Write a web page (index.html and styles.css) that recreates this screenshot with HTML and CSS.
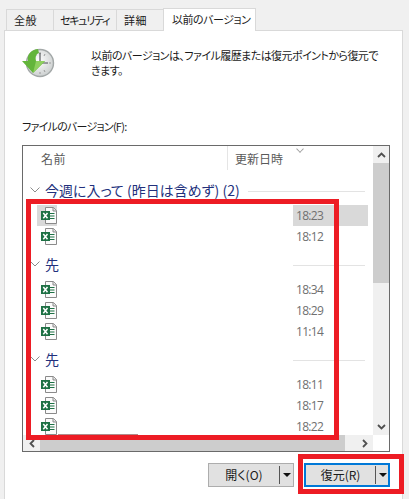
FILE: index.html
```html
<!DOCTYPE html>
<html lang="ja">

<head>
  <meta charset="UTF-8" />
  <meta name="viewport" content="width=device-width, initial-scale=1.0" />
  <title>以前のバージョン</title>
  <link rel="stylesheet" href="styles.css">
</head>

<body>
  <svg class="defs" width="0" height="0">
    <symbol id="xls" viewBox="0 0 20 22">
      <path d="M8.5 2.5h8l3 3v13h-11z" fill="#fbfbfb" stroke="#8a8a8a" />
      <path d="M16 2.5v3.5h3.5" fill="#e8e8e8" stroke="#8a8a8a" />
      <path d="M13 8.5h4.5M13 11h4.5M13 13.5h4.5" stroke="#1e7145" stroke-width="1.2" />
      <rect x="4" y="6" width="9" height="9" fill="#1e7145" />
      <path d="M6.3 8l4.2 5.2M10.5 8l-4.2 5.2" stroke="#fff" stroke-width="1.5" />
    </symbol>
    <symbol id="chev" viewBox="0 0 10 6">
      <path d="M.5.5L5 5 9.5.5" fill="none" stroke="#8c8c8c" />
    </symbol>
  </svg>

  <nav class="tabs">
    <div class="tab">全般</div>
    <div class="tab tab-security">セキュリティ</div>
    <div class="tab">詳細</div>
    <div class="tab tab-active">以前のバージョン</div>
  </nav>

  <main class="panel">
    <section class="info">
      <svg class="clock" width="34" height="32" viewBox="0 0 34 32">
        <defs>
          <radialGradient id="face" cx="0.45" cy="0.4" r="0.7">
            <stop offset="0" stop-color="#ffffff" />
            <stop offset="1" stop-color="#c4c8c8" />
          </radialGradient>
        </defs>
        <circle cx="19" cy="16" r="13.5" fill="url(#face)" stroke="#a3a8a8" stroke-width="1.4" />
        <path d="M19 5v2M19 25v2M8 16h2M28 16h2M24 7l-1 2M14 7l1 2M24 25l-1-2" stroke="#9a9a9a" />
        <path d="M19 6v10h8" fill="none" stroke="#4b4f52" stroke-width="1.1" />
        <path d="M17 2C9 3 6 8 7 14L1 14 12 26 24 14 15 14C14 10 15 7 18 6z" fill="#63b53b" />
        <path d="M12 26L24 14 15 14z" fill="#8fd05f" />
      </svg>
      <p class="info-text">以前のバージョンは、ファイル履歴または復元ポイントから復元で<br>きます。</p>
    </section>

    <label class="list-label">ファイルのバージョン(F):</label>

    <section class="list">
      <div class="list-main">
        <div class="list-head">
          <div class="col-name">名前</div>
          <div class="col-date">更新日時</div>
        </div>

        <div class="group">
          <div class="group-head">
            <svg class="chev" width="10" height="6"><use href="#chev" /></svg>
            <span class="group-title">今週に入って (昨日は含めず) (2)</span>
            <span class="rule"></span>
          </div>
          <div class="row row-selected">
            <span class="row-icon"><svg width="20" height="22"><use href="#xls" /></svg></span>
            <span class="row-time">18:23</span>
          </div>
          <div class="row">
            <span class="row-icon"><svg width="20" height="22"><use href="#xls" /></svg></span>
            <span class="row-time">18:12</span>
          </div>
        </div>

        <div class="group">
          <div class="group-head">
            <svg class="chev" width="10" height="6"><use href="#chev" /></svg>
            <span class="group-title">先</span>
            <span class="rule rule-short"></span>
          </div>
          <div class="row">
            <span class="row-icon"><svg width="20" height="22"><use href="#xls" /></svg></span>
            <span class="row-time">18:34</span>
          </div>
          <div class="row">
            <span class="row-icon"><svg width="20" height="22"><use href="#xls" /></svg></span>
            <span class="row-time">18:29</span>
          </div>
          <div class="row">
            <span class="row-icon"><svg width="20" height="22"><use href="#xls" /></svg></span>
            <span class="row-time">11:14</span>
          </div>
        </div>

        <div class="group">
          <div class="group-head">
            <svg class="chev" width="10" height="6"><use href="#chev" /></svg>
            <span class="group-title">先</span>
            <span class="rule rule-short"></span>
          </div>
          <div class="row">
            <span class="row-icon"><svg width="20" height="22"><use href="#xls" /></svg></span>
            <span class="row-time">18:11</span>
          </div>
          <div class="row">
            <span class="row-icon"><svg width="20" height="22"><use href="#xls" /></svg></span>
            <span class="row-time">18:17</span>
          </div>
          <div class="row">
            <span class="row-icon"><svg width="20" height="22"><use href="#xls" /></svg></span>
            <span class="row-time">18:22</span>
          </div>
        </div>
      </div>

      <div class="vscroll">
        <div class="sb-btn">
          <svg width="9" height="6" viewBox="0 0 9 6"><path d="M1 5l3.5-3.5L8 5" fill="none" stroke="#505050" stroke-width="1.8" /></svg>
        </div>
        <div class="vthumb"></div>
        <div class="sb-track"></div>
        <div class="sb-btn">
          <svg width="9" height="6" viewBox="0 0 9 6"><path d="M1 1l3.5 3.5L8 1" fill="none" stroke="#505050" stroke-width="1.8" /></svg>
        </div>
      </div>

      <div class="hscroll">
        <div class="sb-btn">
          <svg width="6" height="9" viewBox="0 0 6 9"><path d="M5 1L1.5 4.5 5 8" fill="none" stroke="#505050" stroke-width="1.8" /></svg>
        </div>
        <div class="hthumb"></div>
        <div class="sb-track"></div>
        <div class="sb-btn">
          <svg width="6" height="9" viewBox="0 0 6 9"><path d="M1 1l3.5 3.5L1 8" fill="none" stroke="#505050" stroke-width="1.8" /></svg>
        </div>
      </div>
      <div class="corner"></div>
    </section>

    <section class="actions">
      <div class="split-btn">
        <span class="split-label">開く(O)</span>
        <span class="split-arrow"></span>
      </div>
      <div class="split-btn split-default">
        <span class="split-label">復元(R)</span>
        <span class="split-arrow"></span>
      </div>
    </section>
  </main>

  <!-- red annotation boxes drawn over the dialog -->
  <div class="mark mark-list"></div>
  <div class="mark-edge"></div>
  <div class="mark mark-restore"></div>
</body>

</html>
```

FILE: styles.css
```css
* {
  box-sizing: border-box;
}

body {
  margin: 0;
  width: 409px;
  height: 499px;
  overflow: hidden;
  position: relative;
  background: #f0f0f0;
  color: #1a1a1a;
  font-family: "Noto Sans CJK JP", "Open Sans", sans-serif;
  font-size: 12px;
  font-feature-settings: "palt";
}

.defs {
  position: absolute;
}

.tabs {
  display: flex;
  align-items: flex-end;
  height: 31px;
  padding-left: 6px;
}

.tab {
  width: 47px;
  height: 21px;
  margin-bottom: 1px;
  padding-left: 7px;
  border: 1px solid #d9d9d9;
  border-bottom: none;
  border-right: none;
  font-size: 11px;
  line-height: 20px;
  letter-spacing: 0.5px;
  white-space: nowrap;
}

.tab-security {
  width: 63px;
  padding-left: 6px;
  letter-spacing: -1.3px;
}

.tab-active {
  width: 93px;
  height: 23px;
  margin-bottom: 0;
  padding-left: 8px;
  background: #fff;
  border-right: 1px solid #d9d9d9;
  position: relative;
  letter-spacing: -0.5px;
  line-height: 21px;
}

.panel {
  width: 399px;
  height: 469px;
  margin-left: 4px;
  margin-top: -1px;
  padding: 0 13px 0 17px;
  background: #fff;
  border: 1px solid #d9d9d9;
  border-bottom: none;
}

.info {
  display: flex;
  height: 87px;
  padding-top: 16px;
}

.clock {
  flex: none;
  margin-left: -1px;
}

.info-text {
  margin: 1px 0 0 36px;
  white-space: nowrap;
  font-size: 11px;
  letter-spacing: -0.55px;
  line-height: 15px;
}

.list-label {
  display: block;
  height: 27px;
  font-size: 11px;
  letter-spacing: -0.75px;
  line-height: 16px;
}

.list {
  display: grid;
  grid-template-columns: 350px 16px;
  grid-template-rows: 289px 16px;
  width: 368px;
  height: 307px;
  border: 1px solid #6a6a6a;
}

.list-main {
  overflow: hidden;
}

.list-head {
  display: flex;
  height: 24px;
  margin-bottom: 10px;
  color: #5a5a5a;
  line-height: 26px;
}

.col-name {
  width: 205px;
  padding-left: 18px;
  border-right: 1px solid #e5e5e5;
  letter-spacing: 0.5px;
}

.col-date {
  position: relative;
  padding-left: 7px;
  flex: 1;
}

.col-date::after {
  content: "";
  position: absolute;
  left: 69px;
  top: 0;
  width: 5px;
  height: 5px;
  border-right: 1px solid #a0a0a0;
  border-bottom: 1px solid #a0a0a0;
  transform: rotate(45deg) scale(0.9, 0.9);
}

.group {
  margin-bottom: 7px;
}

.group-head {
  display: flex;
  align-items: center;
  height: 20px;
  margin-bottom: 5px;
  padding-left: 7px;
}

.chev {
  flex: none;
  margin-right: 5px;
}

.group-title {
  color: #22307c;
  font-size: 14px;
  white-space: nowrap;
}

.rule {
  flex: 1;
  height: 1px;
  margin: 2px 8px 0;
  background: #e3e3e3;
}

.rule-short {
  flex: none;
  width: 72px;
  margin-left: auto;
}

.row {
  display: flex;
  align-items: center;
  justify-content: space-between;
  height: 21px;
  padding: 0 5px 0 14px;
  color: #707070;
}

.row-icon {
  display: block;
  width: 20px;
  height: 21px;
}

.row-time {
  width: 75px;
  height: 21px;
  padding-left: 3px;
  line-height: 22px;
  letter-spacing: -0.7px;
  font-family: "Open Sans", sans-serif;
}

.row-selected .row-icon,
.row-selected .row-time {
  background: #d9d9d9;
}

.vscroll,
.hscroll {
  display: flex;
  background: #f0f0f0;
}

.vscroll {
  flex-direction: column;
}

.sb-btn {
  flex: none;
  display: flex;
  align-items: center;
  justify-content: center;
  width: 16px;
  height: 17px;
}

.hscroll .sb-btn {
  width: 17px;
  height: 16px;
}

.sb-track {
  flex: 1;
}

.vthumb {
  height: 120px;
  background: #cdcdcd;
}

.hthumb {
  width: 305px;
  background: #cdcdcd;
}

.corner {
  background: #fff;
}

.actions {
  display: flex;
  justify-content: flex-end;
  gap: 10px;
  width: 368px;
  margin-top: 11px;
}

.split-btn {
  display: flex;
  align-items: center;
  width: 86px;
  height: 24px;
  background: #e1e1e1;
  border: 1px solid #adadad;
}

.split-default {
  border: 2px solid #0078d7;
}

.split-label {
  width: 71px;
  height: 18px;
  border-right: 1px solid #555;
  text-align: center;
  line-height: 18px;
}

.split-default .split-label {
  width: 70px;
}

.split-arrow {
  width: 0;
  height: 0;
  margin-left: 3px;
  border-left: 4px solid transparent;
  border-right: 4px solid transparent;
  border-top: 4px solid #111;
}

.mark {
  position: absolute;
  border: 5px solid #ed1c24;
}

.mark-list {
  left: 26px;
  top: 199px;
  width: 313px;
  height: 241px;
}

.mark-edge {
  position: absolute;
  left: 58px;
  top: 434px;
  width: 80px;
  height: 1px;
  background: #b08a8a;
}

.mark-restore {
  left: 298px;
  top: 454px;
  width: 106px;
  height: 40px;
}
```
